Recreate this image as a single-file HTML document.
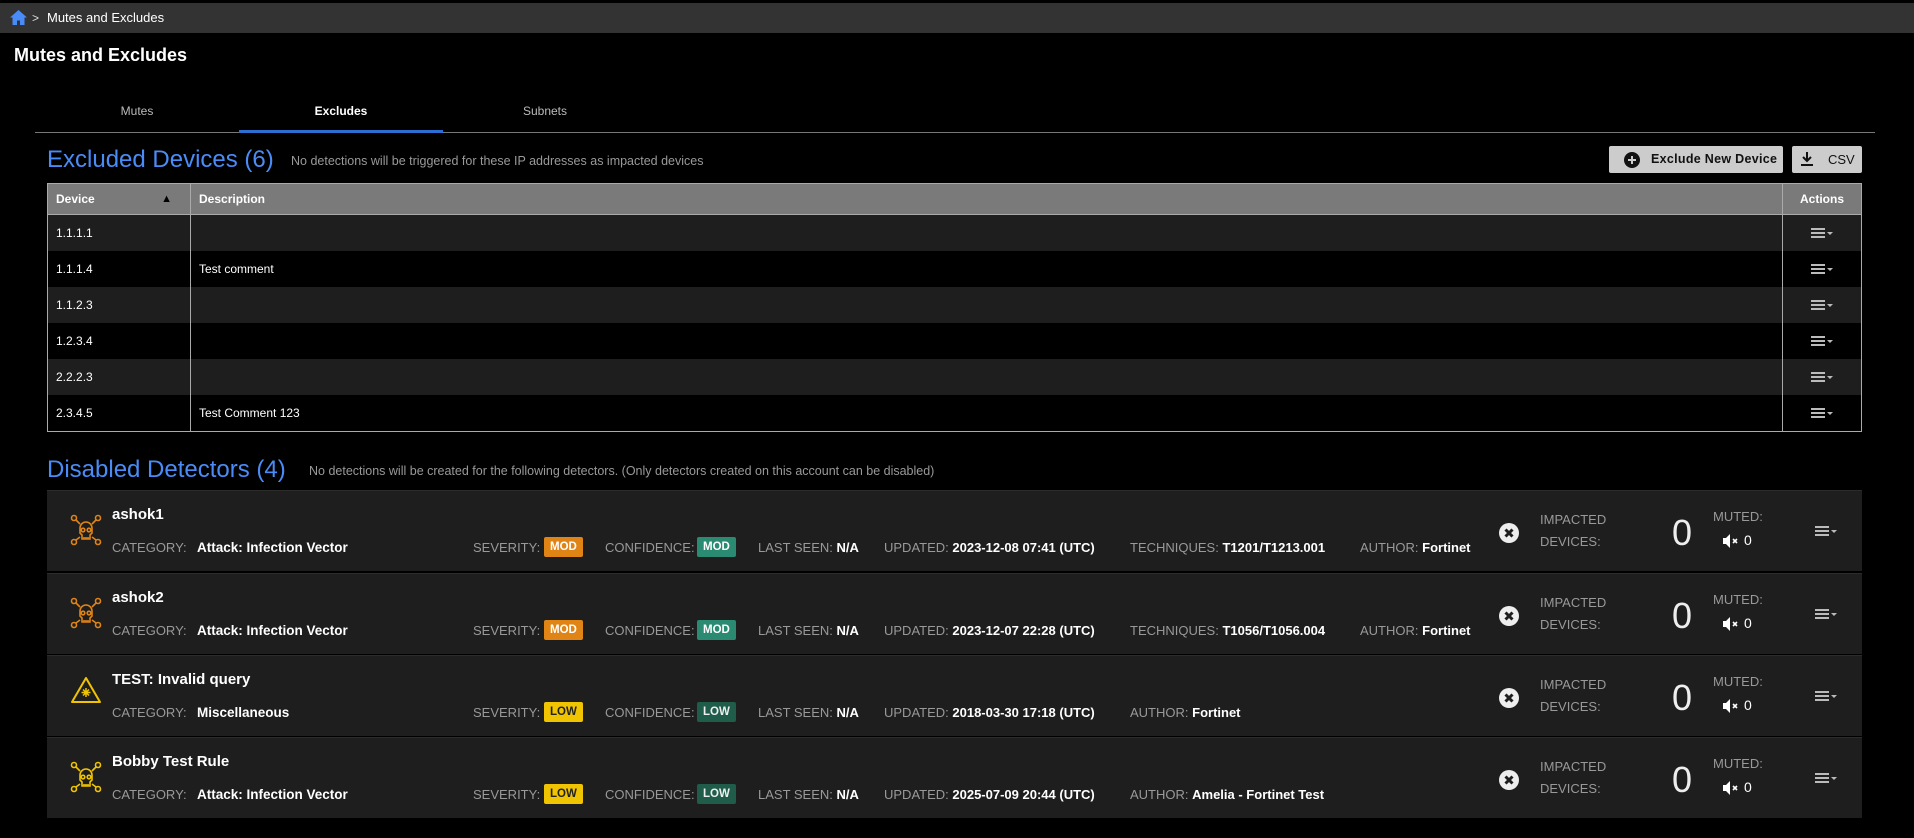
<!DOCTYPE html>
<html><head><meta charset="utf-8"><style>
*{margin:0;padding:0;box-sizing:border-box}
body{width:1914px;height:838px;background:#000;font-family:"Liberation Sans",sans-serif;color:#fff;position:relative;overflow:hidden}
.a{position:absolute;white-space:nowrap}
.bar{left:0;top:3px;width:1914px;height:30px;background:#333}
.tab{font-size:12px;color:#bbb;top:104px;text-align:center;width:200px}
.tbl{left:47px;top:183px;width:1815px;border:1px solid #aaa}
.row{height:36px;display:flex;font-size:12px;align-items:center}
.row div{height:100%;display:flex;align-items:center}
.c1{width:143px;padding-left:8px;border-right:1px solid #aaa}
.c2{flex:1;padding-left:8px;border-right:1px solid #aaa}
.c3{width:78px;justify-content:center}
.hd{height:31px;background:#7a7a7a;font-weight:bold;border-bottom:1px solid #aaa}
.odd{background:#1e1e1e}
.menu{display:inline-block;width:22px;height:12px;position:relative}
.menu i{position:absolute;left:0;width:14px;height:2px;background:#bbb}
.menu b{position:absolute;left:16px;top:5px;border-left:3px solid transparent;border-right:3px solid transparent;border-top:3px solid #bbb}
.card{left:47px;width:1815px;height:81px;background:#1e1e1e;border-top:1px solid #2c2c2c}
.lbl{color:#999;font-size:13px}
.val{color:#fff;font-weight:bold;font-size:13.5px}
.badge{display:inline-block;font-size:11.5px;font-weight:bold;color:#fff;padding:0 6px;height:20px;line-height:20px;border-radius:2px;vertical-align:middle}
.mod{background:#e08416}.low{background:#f0c400;color:#222}.cmod{background:#2a8a72}.clow{background:#1f5c4a;color:#eee}
</style></head><body>
<div class="a bar"></div>
<svg class="a" style="left:10px;top:10px" width="17" height="15" viewBox="0 0 17 15"><path d="M8.5 0L0 7.5h2.5V15h4.5v-4.5h3V15h4.5V7.5H17z" fill="#4a8cf7"/></svg>
<div class="a" style="left:32px;top:11px;font-size:12px;color:#ddd">&gt;</div>
<div class="a" style="left:47px;top:10px;font-size:13px">Mutes and Excludes</div>
<div class="a" style="left:14px;top:45px;font-size:18px;font-weight:bold">Mutes and Excludes</div>

<div class="a tab" style="left:37px">Mutes</div>
<div class="a tab" style="left:241px;color:#fff;font-weight:bold">Excludes</div>
<div class="a tab" style="left:445px">Subnets</div>
<div class="a" style="left:35px;top:132px;width:1840px;height:1px;background:#777"></div>
<div class="a" style="left:239px;top:130px;width:204px;height:3px;background:#2a6fd1"></div>

<div class="a" style="left:47px;top:146px;font-size:24px;color:#4a8cf7">Excluded Devices (6)</div>
<div class="a" style="left:291px;top:154px;font-size:12.5px;color:#999">No detections will be triggered for these IP addresses as impacted devices</div>

<div class="a" style="left:1609px;top:146px;width:174px;height:27px;background:#ccc;border-radius:2px;color:#111;font-size:12.5px;font-weight:bold;line-height:27px;padding-left:42px;letter-spacing:.3px">Exclude New Device</div>
<svg class="a" style="left:1624px;top:152px" width="16" height="16"><circle cx="8" cy="8" r="8" fill="#111"/><path d="M8 4v8M4 8h8" stroke="#ccc" stroke-width="2"/></svg>
<div class="a" style="left:1792px;top:146px;width:70px;height:27px;background:#ccc;border-radius:2px;color:#111;font-size:13px;line-height:27px;padding-left:36px">CSV</div>
<svg class="a" style="left:1800px;top:151px" width="14" height="16"><path d="M7 1v9M3 6l4 4 4-4M1 14h12" stroke="#111" stroke-width="2" fill="none"/></svg>

<div class="a tbl">
<div class="row hd"><div class="c1" style="justify-content:space-between;padding-right:18px">Device<span style="font-size:11px;color:#000">▲</span></div><div class="c2">Description</div><div class="c3">Actions</div></div>
<div class="row odd"><div class="c1">1.1.1.1</div><div class="c2"></div><div class="c3"><span class="menu"><i style="top:1px"></i><i style="top:5px"></i><i style="top:9px"></i><b></b></span></div></div>
<div class="row"><div class="c1">1.1.1.4</div><div class="c2">Test comment</div><div class="c3"><span class="menu"><i style="top:1px"></i><i style="top:5px"></i><i style="top:9px"></i><b></b></span></div></div>
<div class="row odd"><div class="c1">1.1.2.3</div><div class="c2"></div><div class="c3"><span class="menu"><i style="top:1px"></i><i style="top:5px"></i><i style="top:9px"></i><b></b></span></div></div>
<div class="row"><div class="c1">1.2.3.4</div><div class="c2"></div><div class="c3"><span class="menu"><i style="top:1px"></i><i style="top:5px"></i><i style="top:9px"></i><b></b></span></div></div>
<div class="row odd"><div class="c1">2.2.2.3</div><div class="c2"></div><div class="c3"><span class="menu"><i style="top:1px"></i><i style="top:5px"></i><i style="top:9px"></i><b></b></span></div></div>
<div class="row"><div class="c1">2.3.4.5</div><div class="c2">Test Comment 123</div><div class="c3"><span class="menu"><i style="top:1px"></i><i style="top:5px"></i><i style="top:9px"></i><b></b></span></div></div>
</div>

<div class="a" style="left:47px;top:456px;font-size:24px;color:#4a8cf7">Disabled Detectors (4)</div>
<div class="a" style="left:309px;top:464px;font-size:12.5px;color:#999">No detections will be created for the following detectors. (Only detectors created on this account can be disabled)</div>

<div id="cards"></div>
<script>
var cards=[
{t:"ashok1",c:"Attack: Infection Vector",s:"MOD",cf:"MOD",u:"2023-12-08 07:41 (UTC)",tech:"T1201/T1213.001",au:"Fortinet",ic:"skull",col:"#e08416"},
{t:"ashok2",c:"Attack: Infection Vector",s:"MOD",cf:"MOD",u:"2023-12-07 22:28 (UTC)",tech:"T1056/T1056.004",au:"Fortinet",ic:"skull",col:"#e08416"},
{t:"TEST: Invalid query",c:"Miscellaneous",s:"LOW",cf:"LOW",u:"2018-03-30 17:18 (UTC)",tech:null,au:"Fortinet",ic:"warn",col:"#f0c400"},
{t:"Bobby Test Rule",c:"Attack: Infection Vector",s:"LOW",cf:"LOW",u:"2025-07-09 20:44 (UTC)",tech:null,au:"Amelia - Fortinet Test",ic:"skull",col:"#f0c400"}];
var h="";var tops=[490,573,655,737];
cards.forEach(function(d,i){var T=tops[i];var y2=T+50;
h+='<div class="a card" style="top:'+T+'px"></div>';
if(d.ic=="skull"){h+='<svg class="a" style="left:70px;top:'+(T+24)+'px" width="32" height="32" viewBox="0 0 32 32" fill="none" stroke="'+d.col+'" stroke-width="1.6"><circle cx="4" cy="4" r="2.5"/><circle cx="28" cy="4" r="2.5"/><circle cx="4" cy="28" r="2.5"/><circle cx="28" cy="28" r="2.5"/><path d="M6 6l4 4M26 6l-4 4M6 26l4-3M26 26l-4-3"/><path d="M10 14a6 6 0 0 1 12 0v5l-2 2v4h-8v-4l-2-2z"/><circle cx="13" cy="16" r="1.8"/><circle cx="19" cy="16" r="1.8"/><path d="M14 25v-2M16 25v-2M18 25v-2"/></svg>';}
else{h+='<svg class="a" style="left:70px;top:'+(T+21)+'px" width="32" height="28" viewBox="0 0 32 28" fill="none" stroke="'+d.col+'" stroke-width="2"><path d="M16 2L2 26h28z" stroke-linejoin="round"/><path d="M16 12v9M11.5 16.5h9M13 13.5l6 6M19 13.5l-6 6" stroke-width="1.5"/></svg>';}
h+='<div class="a" style="left:112px;top:'+(T+16)+'px;font-size:15px;font-weight:bold">'+d.t+'</div>';
h+='<div class="a lbl" style="left:112px;top:'+y2+'px">CATEGORY:</div><div class="a val" style="left:197px;top:'+y2+'px">'+d.c+'</div>';
h+='<div class="a lbl" style="left:473px;top:'+(y2)+'px">SEVERITY:</div><div class="a" style="left:544px;top:'+(y2-3)+'px"><span class="badge '+(d.s=="MOD"?"mod":"low")+'">'+d.s+'</span></div>';
h+='<div class="a lbl" style="left:605px;top:'+y2+'px">CONFIDENCE:</div><div class="a" style="left:697px;top:'+(y2-3)+'px"><span class="badge '+(d.cf=="MOD"?"cmod":"clow")+'">'+d.cf+'</span></div>';
h+='<div class="a lbl" style="left:758px;top:'+y2+'px">LAST SEEN: <b style="color:#fff">N/A</b></div>';
h+='<div class="a lbl" style="left:884px;top:'+y2+'px">UPDATED: <b style="color:#fff">'+d.u+'</b></div>';
var ax=1130;
if(d.tech){h+='<div class="a lbl" style="left:1130px;top:'+y2+'px">TECHNIQUES: <b style="color:#fff">'+d.tech+'</b></div>';ax=1360;}
h+='<div class="a lbl" style="left:'+ax+'px;top:'+y2+'px">AUTHOR: <b style="color:#fff">'+d.au+'</b></div>';
h+='<svg class="a" style="left:1499px;top:'+(T+33)+'px" width="20" height="20"><circle cx="10" cy="10" r="10" fill="#eee"/><path d="M6.5 6.5l7 7M13.5 6.5l-7 7" stroke="#1e1e1e" stroke-width="3"/></svg>';
h+='<div class="a lbl" style="left:1540px;top:'+(T+19)+'px;line-height:22px">IMPACTED<br>DEVICES:</div>';
h+='<div class="a" style="left:1672px;top:'+(T+22)+'px;font-size:36px;font-weight:300;color:#eee">0</div>';
h+='<div class="a lbl" style="left:1713px;top:'+(T+19)+'px">MUTED:</div>';
h+='<svg class="a" style="left:1723px;top:'+(T+44)+'px" width="16" height="14"><path d="M0 4h3l4-4v14l-4-4H0z" fill="#fff"/><path d="M10 5l4 4M14 5l-4 4" stroke="#fff" stroke-width="1.6"/></svg>';
h+='<div class="a" style="left:1744px;top:'+(T+42)+'px;font-size:14px">0</div>';
h+='<span class="menu" style="position:absolute;left:1815px;top:'+(T+35)+'px"><i style="top:1px"></i><i style="top:5px"></i><i style="top:9px"></i><b></b></span>';
});
document.getElementById("cards").innerHTML=h;
</script>
</body></html>
